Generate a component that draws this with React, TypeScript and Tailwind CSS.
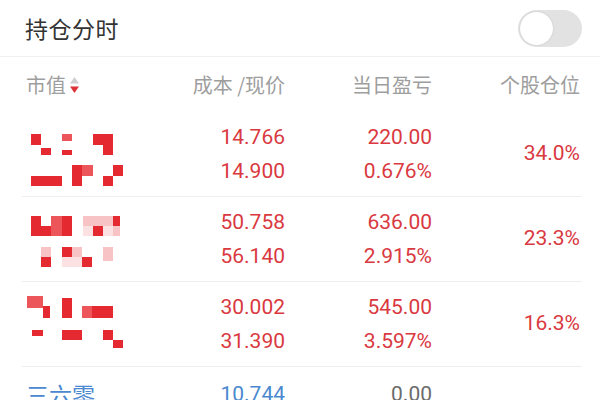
type Block = [number, number, number, number, string];

const R = "#e42a30";
const L = "#ec5559";
const P = "#f7c3c5";
const PP = "#fbe1e2";

type Holding = {
  mosaic?: Block[];
  name?: string;
  cost: string;
  price: string;
  pnl: string;
  pnlPct: string;
  weight: string;
  tone: "up" | "flat";
};

const holdings: Holding[] = [
  {
    mosaic: [
      [5, 12, 10, 11, R],
      [15, 26, 10, 7, R],
      [36, 12, 10, 7, L],
      [36, 28, 10, 5, R],
      [67, 12, 20, 11, R],
      [77, 23, 10, 10, R],
      [5, 54, 31, 10, R],
      [46, 43, 10, 21, R],
      [56, 43, 11, 11, L],
      [87, 43, 10, 11, R],
      [77, 54, 10, 10, R],
    ],
    cost: "14.766",
    price: "14.900",
    pnl: "220.00",
    pnlPct: "0.676%",
    weight: "34.0%",
    tone: "up",
  },
  {
    mosaic: [
      [5, 9, 10, 20, R],
      [15, 19, 10, 10, R],
      [25, 9, 11, 20, L],
      [36, 9, 10, 20, R],
      [57, 9, 30, 10, P],
      [57, 19, 10, 10, PP],
      [67, 19, 10, 10, R],
      [77, 19, 10, 10, PP],
      [87, 9, 7, 10, R],
      [87, 19, 7, 10, P],
      [15, 40, 10, 10, P],
      [15, 50, 10, 10, R],
      [36, 40, 10, 10, R],
      [46, 40, 10, 10, P],
      [36, 50, 20, 10, PP],
      [56, 50, 10, 10, R],
      [77, 40, 10, 14, P],
    ],
    cost: "50.758",
    price: "56.140",
    pnl: "636.00",
    pnlPct: "2.915%",
    weight: "23.3%",
    tone: "up",
  },
  {
    mosaic: [
      [1, 4, 16, 12, L],
      [17, 14, 7, 12, R],
      [36, 6, 10, 20, R],
      [56, 14, 10, 12, L],
      [66, 14, 21, 12, R],
      [6, 38, 11, 6, R],
      [36, 38, 20, 10, R],
      [77, 38, 10, 10, R],
      [87, 48, 10, 8, R],
    ],
    cost: "30.002",
    price: "31.390",
    pnl: "545.00",
    pnlPct: "3.597%",
    weight: "16.3%",
    tone: "up",
  },
  {
    name: "三六零",
    cost: "10.744",
    price: "10.744",
    pnl: "0.00",
    pnlPct: "0.000%",
    weight: "15.9%",
    tone: "flat",
  },
];

const cjk = { fontFamily: '"Noto Sans CJK SC", "Noto Sans", sans-serif' };
const num = { fontFamily: 'Roboto, "Noto Sans", sans-serif' };

function Mosaic({ blocks }: { blocks: Block[] }) {
  return (
    <svg width="110" height="64" viewBox="0 0 110 64">
      {blocks.map(([x, y, w, h, c], i) => (
        <rect key={i} x={x} y={y} width={w} height={h} fill={c} />
      ))}
    </svg>
  );
}

function SortIcon() {
  return (
    <svg width="11" height="20" viewBox="0 0 11 20" className="ml-[3px]">
      <path d="M5.5 2 L10 8.5 H1 Z" fill="#cfcfcf" />
      <path d="M5.5 18 L10 11.5 H1 Z" fill="#dc3338" />
    </svg>
  );
}

function Row({ h }: { h: Holding }) {
  const up = h.tone === "up";
  const costColor = up ? "text-[#d9393f]" : "text-[#4a88cf]";
  const pnlColor = up ? "text-[#d9393f]" : "text-[#6b6b6b]";
  const wColor = up ? "text-[#d9393f]" : "text-[#9cc0e6]";
  return (
    <div className="flex h-[85px] items-center border-b border-[#efefef] ml-[22px] mr-[18px] pl-[4px] pr-[2px]">
      <div className="w-[159px] h-full flex items-center">
        {h.mosaic ? (
          <Mosaic blocks={h.mosaic} />
        ) : (
          <div className="self-start pt-[12px] text-[23px] text-[#4a88cf] leading-[30px]" style={cjk}>
            {h.name}
          </div>
        )}
      </div>
      <div
        className={`w-[100px] h-full flex flex-col items-end justify-center text-[21px] leading-[34px] ${costColor} ${h.mosaic ? "" : "justify-start pt-[10px]"}`}
        style={num}
      >
        <span>{h.cost}</span>
        <span>{h.price}</span>
      </div>
      <div
        className={`w-[147px] h-full flex flex-col items-end justify-center text-[21px] leading-[34px] ${pnlColor} ${h.mosaic ? "" : "justify-start pt-[10px]"}`}
        style={num}
      >
        <span>{h.pnl}</span>
        <span>{h.pnlPct}</span>
      </div>
      <div className={`w-[148px] h-full flex items-center justify-end text-[21px] ${wColor}`} style={num}>
        {h.weight}
      </div>
    </div>
  );
}

export default function App() {
  return (
    <div className="w-[600px] h-[400px] overflow-hidden bg-white">
      <div className="h-[57px] flex items-center justify-between pl-[25px] pr-[18px] border-b border-[#f0f0f0]">
        <span className="text-[23px] text-[#333333] tracking-[0.5px]" style={cjk}>
          持仓分时
        </span>
        <div className="w-[64px] h-[37px] rounded-full bg-[#e2e2e2] p-[2px] flex items-center">
          <div className="w-[33px] h-[33px] rounded-full bg-white shadow-[0_0_2px_rgba(0,0,0,0.15)]" />
        </div>
      </div>
      <div className="h-[55px] flex items-center pl-[26px] pr-[20px] text-[20px] text-[#9e9e9e]" style={cjk}>
        <div className="w-[159px] flex items-center">
          市值
          <SortIcon />
        </div>
        <div className="w-[100px] text-right whitespace-nowrap">成本 /现价</div>
        <div className="w-[147px] text-right">当日盈亏</div>
        <div className="w-[148px] text-right">个股仓位</div>
      </div>
      {holdings.map((h, i) => (
        <Row key={i} h={h} />
      ))}
    </div>
  );
}
